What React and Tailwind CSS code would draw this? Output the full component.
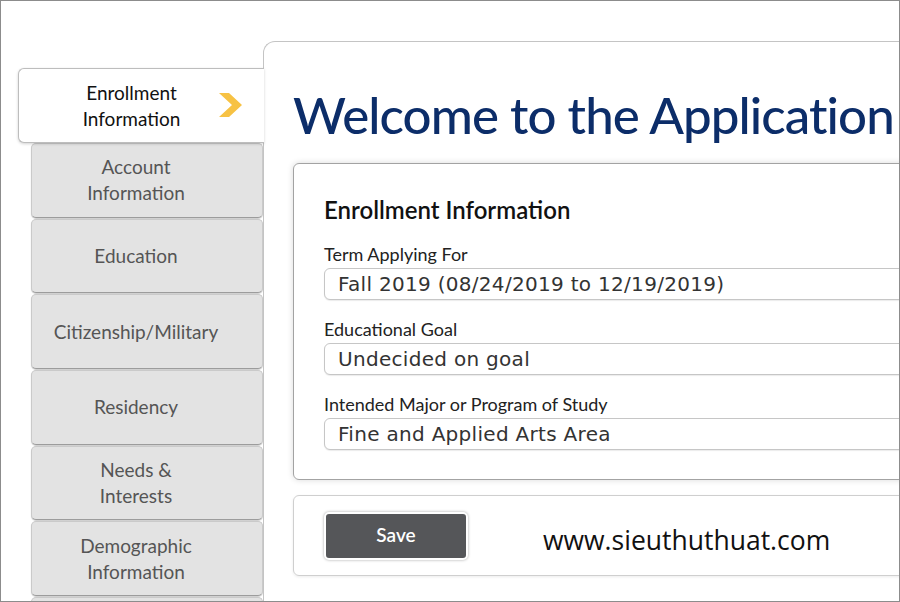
import React from "react";

const tabs = [
  ["Account", "Information"],
  ["Education"],
  ["Citizenship/Military"],
  ["Residency"],
  ["Needs &", "Interests"],
  ["Demographic", "Information"],
  [],
];

const fields = [
  { label: "Term Applying For", value: "Fall 2019 (08/24/2019 to 12/19/2019)" },
  { label: "Educational Goal", value: "Undecided on goal" },
  { label: "Intended Major or Program of Study", value: "Fine and Applied Arts Area" },
];

const Chevron = () => (
  <svg width="26" height="26" viewBox="0 0 26 26" className="absolute right-[20px] top-[23px]">
    <polygon points="1,1 11,1 24,13 11,25 1,25 14,13" fill="#f7c244" />
  </svg>
);

const App = () => {
  return (
    <div className="w-[900px] h-[602px] bg-white border border-[#8c8c8c] overflow-hidden font-['Lato',sans-serif]">
      <div className="flex items-start">
        {/* side tabs */}
        <div className="w-[262px] pl-[17px] mt-[67px] flex flex-col shrink-0">
          <div className="relative z-10 w-[246px] h-[75px] bg-white border border-r-0 border-[#bdbdbd] rounded-l-[6px] shadow-[0_1px_3px_rgba(0,0,0,0.18)] flex flex-col items-center justify-center pr-[20px] text-[19px] leading-[26px] text-[#111]">
            <span>Enrollment</span>
            <span>Information</span>
            <Chevron />
          </div>
          <div className="flex flex-col gap-px">
            {tabs.map((lines, i) => (
              <div
                key={i}
                className="ml-[13px] h-[74.7px] bg-[#e3e3e3] border border-[#cacaca] border-b-[#9c9c9c] rounded-[5px] shadow-[0_1px_1px_rgba(0,0,0,0.2)] flex flex-col items-center justify-center pr-[22px] text-[19px] leading-[26px] text-[#555]"
              >
                {lines.map((l) => (
                  <span key={l}>{l}</span>
                ))}
              </div>
            ))}
          </div>
        </div>

        {/* main panel */}
        <div className="mt-[40px] w-[700px] shrink-0 h-[600px] border-t border-l border-[#c4c4c4] rounded-tl-[12px] pl-[29px] pt-[43px]">
          <h1 className="text-[51px] leading-[60px] font-medium tracking-[-0.9px] text-[#0c2d69] whitespace-nowrap">
            Welcome to the Application
          </h1>

          <div className="mt-[18px] w-[640px] border border-[#a3a3a3] rounded-[6px] shadow-[0_0_6px_rgba(0,0,0,0.15)] pl-[30px] pt-[31px] pb-[29px]">
            <h2 className="text-[24px] leading-[30px] font-semibold text-[#111]">
              Enrollment Information
            </h2>
            <div className="mt-[18px] flex flex-col gap-[18px]">
              {fields.map((f) => (
                <div key={f.label}>
                  <div className="text-[18px] leading-[22px] text-[#222]">{f.label}</div>
                  <div className="mt-[3px] h-[32px] border border-[#c6c6c6] rounded-[6px] bg-white shadow-[0_1px_1px_rgba(0,0,0,0.08)] flex items-center pl-[13px] font-['DejaVu_Sans',sans-serif] text-[20px] tracking-[0.3px] text-[#333] whitespace-nowrap">
                    {f.value}
                  </div>
                </div>
              ))}
            </div>
          </div>

          <div className="mt-[15px] w-[640px] h-[81px] border border-[#cfcfcf] rounded-[6px] shadow-[0_1px_3px_rgba(0,0,0,0.08)] flex items-center pl-[30px]">
            <button className="w-[144px] h-[48px] bg-[#555659] border-2 border-white rounded-[5px] shadow-[0_0_3px_rgba(0,0,0,0.35)] text-white text-[19px] font-semibold">
              Save
            </button>
            <span className="ml-[75px] mt-[10px] font-['Open_Sans',sans-serif] text-[26.5px] font-medium text-[#111]">
              www.sieuthuthuat.com
            </span>
          </div>
        </div>
      </div>
    </div>
  );
};

export default App;
